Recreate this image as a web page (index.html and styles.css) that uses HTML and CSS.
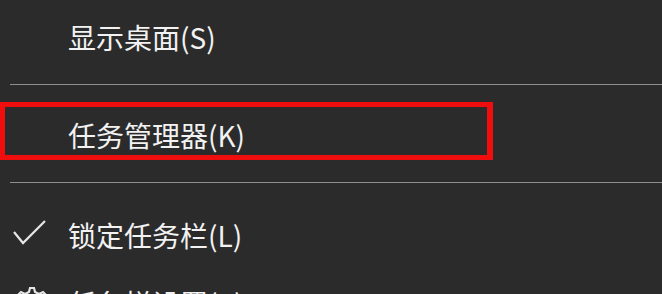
FILE: index.html
```html
<!DOCTYPE html>
<html lang="zh-CN">
<head>
<meta charset="utf-8">
<link rel="stylesheet" href="styles.css">
</head>
<body>
<div class="menu">
  <div class="item first">
    <span class="icon"></span>
    <span class="label">显示桌面(S)</span>
  </div>
  <div class="sep"></div>
  <div class="item">
    <span class="icon"></span>
    <span class="label">任务管理器(K)</span>
  </div>
  <div class="sep"></div>
  <div class="item third">
    <span class="icon">
      <svg width="68" height="64" viewBox="0 0 68 64"><polyline points="14,30 23,41 45,19" fill="none" stroke="#e6e6e6" stroke-width="2.2"/></svg>
    </span>
    <span class="label">锁定任务栏(L)</span>
  </div>
  <div class="item last">
    <span class="icon">
      <svg width="68" height="64" viewBox="0 0 68 64"><g fill="none" stroke="#e6e6e6" stroke-width="2.2"><circle cx="32" cy="32" r="5"/><path d="M29 22 L30 18 H34 L35 22 L39 24 L43 22 L46 25 L44 29 L46 32 L44 35 L46 39 L43 42 L39 40 L35 42 L34 46 H30 L29 42 L25 40 L21 42 L18 39 L20 35 L18 32 L20 29 L18 25 L21 22 L25 24 Z"/></g></svg>
    </span>
    <span class="label">任务栏设置(T)</span>
  </div>
  <div class="highlight"></div>
</div>
</body>
</html>
```

FILE: styles.css
```css
html, body {
  margin: 0;
  padding: 0;
  background: #2b2b2b;
  overflow: hidden;
}
body {
  width: 662px;
  height: 294px;
  font-family: "Noto Sans CJK SC", "Noto Sans", sans-serif;
  color: #f2f2f2;
}
.menu {
  position: relative;
  display: flex;
  flex-direction: column;
}
.item {
  display: flex;
  align-items: center;
  height: 64px;
  flex: none;
}
.item.first {
  margin-top: 4px;
}
.item.third {
  margin-top: 2px;
}
.item.last {
  margin-top: 4px;
}
.icon {
  width: 68px;
  height: 64px;
  flex: none;
  display: flex;
}
.label {
  font-size: 28px;
  line-height: 1;
  padding-top: 2px;
  white-space: nowrap;
}
.sep {
  flex: none;
  height: 1px;
  background: #8e8e8e;
  margin: 16px 0 17px 10px;
}
.highlight {
  position: absolute;
  left: 0;
  top: 102px;
  width: 493px;
  height: 58px;
  box-sizing: border-box;
  border: 5px solid #f00d0d;
  border-right-width: 6px;
}
```
